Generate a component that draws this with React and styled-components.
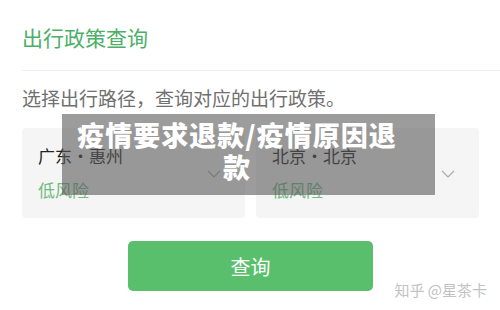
import React from "react";
import styled, { createGlobalStyle } from "styled-components";

const Global = createGlobalStyle`
  html, body { margin: 0; padding: 0; background: #fff; }
  body { width: 500px; height: 310px; overflow: hidden; font-family: "Noto Sans CJK SC", "Noto Sans", sans-serif; }
  #root { position: relative; width: 500px; height: 310px; }
`;

const Page = styled.div`
  position: relative;
  width: 500px;
  height: 310px;
  padding-left: 22px;
  box-sizing: border-box;
  display: flex;
  flex-direction: column;
`;

const Header = styled.div`
  padding-top: 22px;
  padding-bottom: 18px;
  border-bottom: 1px solid #eeeeee;
`;

const Title = styled.div`
  font-size: 21px;
  line-height: 30px;
  color: #4caf68;
`;

const Body = styled.div`
  padding-right: 21px;
  display: flex;
  flex-direction: column;
`;

const Subtitle = styled.div`
  margin-top: 13px;
  font-size: 19px;
  line-height: 28px;
  color: #707070;
`;

const Cards = styled.div`
  margin-top: 16px;
  display: grid;
  grid-template-columns: 1fr 1fr;
  gap: 11px;
`;

const Card = styled.div`
  height: 90px;
  box-sizing: border-box;
  background: #f5f5f5;
  border-radius: 4px;
  padding: 16px 24px 0 16px;
  display: flex;
  align-items: center;
  justify-content: space-between;
`;

const CardText = styled.div`
  align-self: flex-start;
  display: flex;
  flex-direction: column;
  gap: 10px;
`;

const Place = styled.div`
  font-size: 17px;
  line-height: 24px;
  color: #222;
`;

const Risk = styled.div`
  font-size: 17px;
  line-height: 24px;
  color: #6fbb82;
`;

const Chevron = styled.svg`
  width: 14px;
  height: 8px;
  margin-top: -14px;
`;

const Button = styled.div`
  margin: 23px auto 0;
  width: 245px;
  height: 50px;
  border-radius: 5px;
  background: #5abf6d;
  color: #fff;
  font-size: 20px;
  display: flex;
  align-items: center;
  justify-content: center;
`;

const Overlay = styled.div`
  position: absolute;
  left: 62px;
  top: 114px;
  width: 373px;
  height: 81px;
  box-sizing: border-box;
  padding: 5px 36px 0 13px;
  background: rgba(90, 90, 90, 0.6);
  color: #fff;
  font-weight: 900;
  font-size: 27px;
  letter-spacing: 1px;
  line-height: 32px;
  text-align: center;
`;

const Watermark = styled.div`
  position: absolute;
  right: 13px;
  bottom: 11px;
  font-size: 15px;
  line-height: 18px;
  color: #c2c2c2;
`;

const ChevronIcon = () => (
  <Chevron viewBox="0 0 14 8">
    <path d="M1 1 L7 7 L13 1" fill="none" stroke="#aaaaaa" strokeWidth="1.2" />
  </Chevron>
);

const places = [
  { name: "广东·惠州", risk: "低风险" },
  { name: "北京·北京", risk: "低风险" },
];

export default function App() {
  return (
    <>
      <Global />
      <Page>
        <Header>
          <Title>出行政策查询</Title>
        </Header>
        <Body>
          <Subtitle>选择出行路径，查询对应的出行政策。</Subtitle>
          <Cards>
            {places.map((p, i) => (
              <Card key={i}>
                <CardText>
                  <Place>{p.name}</Place>
                  <Risk>{p.risk}</Risk>
                </CardText>
                <ChevronIcon />
              </Card>
            ))}
          </Cards>
          <Button>查询</Button>
        </Body>
        <Overlay>疫情要求退款/疫情原因退款</Overlay>
        <Watermark>知乎 @星茶卡</Watermark>
      </Page>
    </>
  );
}
